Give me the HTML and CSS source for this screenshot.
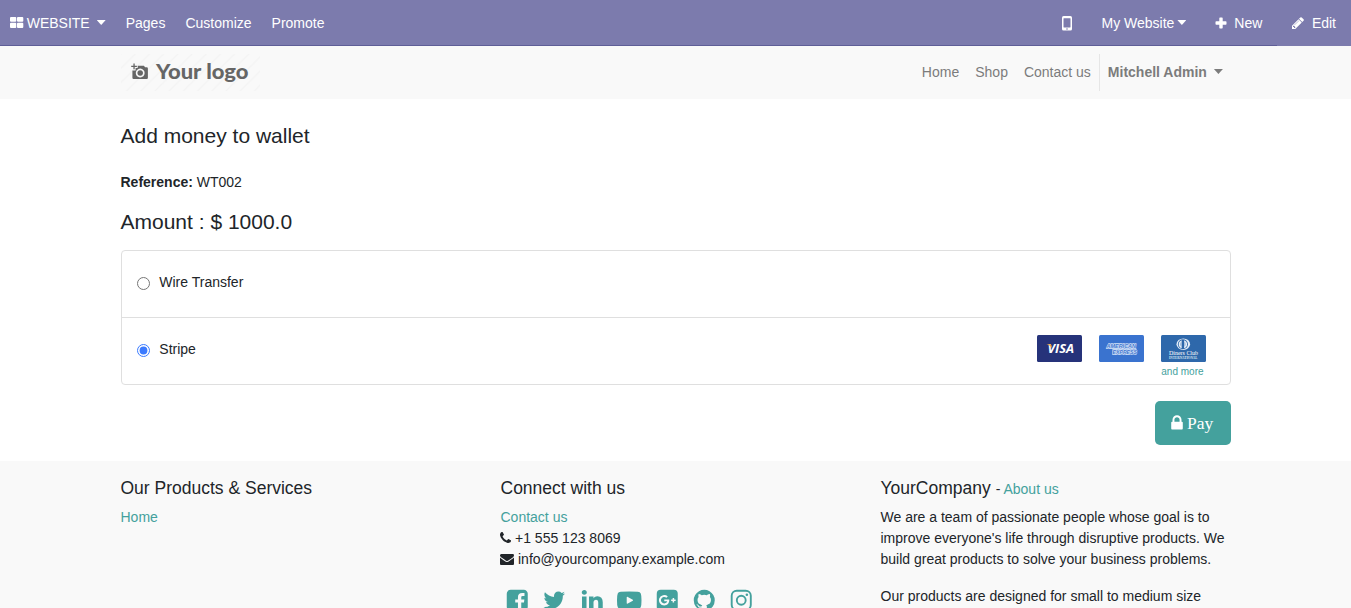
FILE: index.html
```html
<!DOCTYPE html>
<html lang="en">
<head>
<meta charset="utf-8">
<title>Add money to wallet</title>
<link rel="stylesheet" href="styles.css">
</head>
<body>
<nav class="topbar">
  <div class="topbar-left">
    <a class="brand"><svg class="ic" width="14" height="14" viewBox="0 0 14 14"><path d="M1 1h4.300q1 0 1 1v2.800q0 1-1 1H1q-1 0-1-1V2q0-1 1-1zM8 1h4.300q1 0 1 1v2.800q0 1-1 1H8q-1 0-1-1V2q0-1 1-1zM1 6.800h4.300q1 0 1 1v3.200q0 1-1 1H1q-1 0-1-1V7.800q0-1 1-1zM8 6.800h4.300q1 0 1 1v3.200q0 1-1 1H8q-1 0-1-1V7.800q0-1 1-1z"/></svg><span>WEBSITE</span><i class="caret"></i></a>
    <a>Pages</a><a>Customize</a><a>Promote</a>
  </div>
  <div class="topbar-right">
    <a class="mobile"><svg width="10" height="15" viewBox="0 0 10 15"><rect width="10" height="14.500" rx="1.600"/><rect class="screen" x="1.500" y="2.200" width="7" height="9.300" rx=".4"/><circle class="screen" cx="5" cy="13" r=".8"/></svg></a>
    <a class="site">My Website<i class="caret tight"></i></a>
    <a class="new"><svg width="12" height="12" viewBox="0 0 12 12"><path d="M5 .5h2q.7 0 .7.700v3.100h3.100q.7 0 .7.700v2q0 .7-.7.700h-3.100v3.100q0 .7-.7.700h-2q-.7 0-.7-.7v-3.100h-3.100q-.7 0-.7-.7v-2q0-.7.7-.7h3.100v-3.100q0-.7.7-.7z"/></svg>New</a>
    <a class="edit"><svg width="14" height="14" viewBox="0 0 1792 1792"><path d="M491 1536l91-91-235-235-91 91v107h128v128h107zm523-928q0-22-22-22-10 0-17 7l-542 542q-7 7-7 17 0 22 22 22 10 0 17-7l542-542q7-7 7-17zm-54-192l416 416-832 832h-416v-416zm683 96q0 53-37 90l-166 166-416-416 166-165q36-38 90-38 53 0 91 38l235 234q37 39 37 91z"/></svg>Edit</a>
  </div>
</nav>
<header class="site-header">
  <div class="container header-row">
    <svg class="logo" width="139" height="37" viewBox="0 0 139 37">
      <defs><pattern id="stripes" width="14.200" height="14.200" patternUnits="userSpaceOnUse"><path d="M-2 16.200L16.200-2M-2 2L2-2M12.200 16.200L16.200 12.200" stroke="#f3f3f3" stroke-width="1.200"/></pattern></defs>
      <rect width="139" height="37" fill="url(#stripes)"/>
      <path fill="#666" fill-rule="evenodd" d="M12.400 9.500h1.300v2.300h2.200v1.300h-2.200v2.200h-1.300v-2.200h-2.200v-1.300h2.200zM16.700 11.800h6.200l1.200 1.500h1.600q1.200 0 1.200 1.200v9.300q0 1.200-1.200 1.200H12.600q-1.200 0-1.200-1.200v-7.400h3.200v-2.300h2.100zM19.200 14.600a4.400 4.400 0 1 0 .01 0zM19.200 16.200a2.800 2.800 0 1 1-.01 0z"/>
      <text class="logo-text" x="35" y="25.200" textLength="92.500" lengthAdjust="spacingAndGlyphs">Your logo</text>
    </svg>
    <nav class="menu"><a>Home</a><a>Shop</a><a>Contact us</a><a class="user">Mitchell Admin<i class="caret"></i></a></nav>
  </div>
</header>
<main class="container main">
  <h3>Add money to wallet</h3>
  <p class="ref"><b>Reference:</b> WT002</p>
  <h3>Amount : $ 1000.0</h3>
  <form class="card">
    <div class="row"><input type="radio" name="method" id="wire"><label for="wire">Wire Transfer</label></div>
    <div class="row">
      <input type="radio" name="method" id="stripe" checked><label for="stripe">Stripe</label>
      <div class="payments">
        <svg width="45" height="27" viewBox="0 0 45 27"><rect width="45" height="27" rx="1.500" fill="#26337a"/><text class="visa" x="10.500" y="18" textLength="26.500" lengthAdjust="spacingAndGlyphs">VISA</text><path d="M9.500 9.200h3.600q1.200 0 1.400 1.200l.6 2.600q-1.600-2.800-5.600-3.800z" fill="#f0a030"/></svg>
        <svg width="45" height="27" viewBox="0 0 45 27"><rect width="45" height="27" rx="1.500" fill="#3a73cf"/><path d="M9.500 8.300H37v5.200h.8v6.200H13.200v-5.800H7z" fill="#d5e3f7" opacity=".6"/><text class="amex" x="7.500" y="13.200" textLength="29.500" lengthAdjust="spacingAndGlyphs">AMERICAN</text><text class="amex" x="13.500" y="19.300" textLength="24.500" lengthAdjust="spacingAndGlyphs">EXPRESS</text></svg>
        <div class="last"><svg width="45" height="27" viewBox="0 0 45 27"><rect width="45" height="27" rx="1.500" fill="#2e68ab"/><ellipse cx="22.300" cy="9.200" rx="6.800" ry="5.800" fill="#e5eef8"/><circle cx="21.900" cy="9.200" r="5" fill="#2e68ab"/><path d="M20.700 5.200v8q-3-1-3-4t3-4zM23.100 5.200v8q3-1 3-4t-3-4z" fill="#e5eef8"/><path d="M20.300 6.800v4.800q-1-.8-1-2.400t1-2.400zM23.500 6.800v4.800q1-.8 1-2.400t-1-2.400z" fill="#2e68ab" opacity=".5"/><text class="diners" x="8" y="20.300" textLength="29" lengthAdjust="spacingAndGlyphs">Diners Club</text><text class="diners-sub" x="8" y="24.300" textLength="28.500" lengthAdjust="spacingAndGlyphs">INTERNATIONAL</text></svg><a>and more</a></div>
      </div>
    </div>
  </form>
  <div class="actions"><button class="pay"><svg width="18" height="18" viewBox="0 0 1792 1792"><path d="M640 768h512v-192q0-106-75-181t-181-75-181 75-75 181v192zm832 96v576q0 40-28 68t-68 28h-960q-40 0-68-28t-28-68v-576q0-40 28-68t68-28h32v-192q0-184 132-316t316-132 316 132 132 316v192h32q40 0 68 28t28 68z"/></svg>Pay</button></div>
</main>
<footer class="footer">
  <div class="container footer-grid">
    <section><h4>Our Products &amp; Services</h4><a>Home</a></section>
    <section>
      <h4>Connect with us</h4>
      <a>Contact us</a>
      <div class="contact phone"><svg width="14" height="14" viewBox="192 128 1792 1792"><path d="M1600 1240q0 27-10 70.500t-21 68.500q-21 50-122 106-94 51-186 51-27 0-53-3.500t-57.500-12.500-47-14.500-55.500-20.500-49-18q-98-35-175-83-127-79-264-216t-216-264q-48-77-83-175-3-9-18-49t-20.500-55.500-14.500-47-12.500-57.500-3.500-53q0-92 51-186 56-101 106-122 25-11 68.500-21t70.500-10q14 0 21 3 18 6 53 76 11 19 30 54t35 63.500 31 53.500q3 4 17.500 25t21.500 35.500 7 28.500q0 20-28.500 50t-62 55-62 53-28.500 46q0 9 5 22.500t8.500 20.500 14 24 11.500 19q76 137 174 235t235 174q2 1 19 11.500t24 14 20.500 8.500 22.500 5q18 0 46-28.500t53-62 55-62 50-28.500q14 0 28.500 7t35.500 21.500 25 17.500q25 15 53.500 31t63.500 35 54 30q70 35 76 53 3 7 3 21z"/></svg>+1 555 123 8069</div>
      <div class="contact mail"><svg width="14" height="14" viewBox="0 128 1792 1792"><path d="M1792 710v794q0 66-47 113t-113 47h-1472q-66 0-113-47t-47-113v-794q44 49 101 87 362 246 497 345 57 42 92.500 65.500t94.500 48 110 24.500h2q51 0 110-24.500t94.500-48 92.500-65.500q170-123 498-345 57-39 100-87zm0-294q0 79-49 151t-122 123q-376 261-468 325-10 7-42.500 31t-54 38-52 31.500-57.500 27-50 9h-2q-23 0-50-9t-57.500-27-52-31.500-54-38-42.500-31q-91-64-262-182.500t-205-142.500q-62-42-117-115.500t-55-136.500q0-78 41.500-130t118.500-52h1472q65 0 112.500 47t47.500 113z"/></svg>info@yourcompany.example.com</div>
      <div class="social">
        <svg viewBox="0 0 1792 1792"><path d="M1376 128q119 0 203.500 84.500t84.500 203.500v960q0 119-84.500 203.500t-203.500 84.500h-188v-595h199l30-232h-229v-148q0-56 23.500-84t91.500-28l122-1v-207q-63-9-178-9-136 0-217.500 80t-81.500 226v171h-200v232h200v595h-532q-119 0-203.500-84.500t-84.500-203.500v-960q0-119 84.500-203.500t203.500-84.500h960z"/></svg>
        <svg viewBox="0 0 1792 1792"><path d="M1684 408q-67 98-162 167 1 14 1 42 0 130-38 259.500t-115.500 248.500-184.500 210.500-258 146-323 54.500q-271 0-496-145 35 4 78 4 225 0 401-138-105-2-188-64.500t-114-159.500q33 5 61 5 43 0 85-11-112-23-185.500-111.500t-73.500-205.500v-4q68 38 146 41-66-44-105-115t-39-154q0-88 44-163 121 149 294.500 238.500t371.500 99.500q-8-38-8-74 0-134 94.500-228.500t228.500-94.500q140 0 236 102 109-21 205-78-37 115-142 178 93-10 186-50z"/></svg>
        <svg viewBox="0 0 1792 1792"><path d="M477 625v991h-330v-991h330zm21-306q1 73-50.500 122t-135.500 49h-2q-82 0-132-49t-50-122q0-74 51.500-122.500t134.500-48.500 133 48.500 51 122.500zm1166 729v568h-329v-530q0-105-40.500-164.500t-126.500-59.500q-63 0-105.500 34.500t-63.500 85.500q-11 30-11 81v553h-329q2-399 2-647t-1-296l-1-48h329v144h-2q20-32 41-56t56.500-52 87-43.500 114.500-15.500q171 0 275 113.500t104 332.500z"/></svg>
        <svg viewBox="0 0 1792 1792"><path fill-rule="evenodd" d="M896 256q330 0 624 18 175 10 218 120 54 130 54 502t-54 502q-43 110-218 120-294 18-624 18t-624-18q-175-10-218-120Q0 1268 0 896t54-502q43-110 218-120 294-18 624-18zM711 670v452q0 45 45 30l400-225q28-31 0-62L756 640q-45-15-45 30z"/></svg>
        <svg viewBox="0 0 1792 1792"><path fill-rule="evenodd" d="M416 128h960q288 0 288 288v960q0 288-288 288H416q-288 0-288-288V416q0-288 288-288zM1045 905q0-26-6-64H677v132h217q-20 148-217 160a237 237 0 1 1 156-414l104-100A383 383 0 1 0 677 1280q360-15 368-375zM1290 731v110h-109v110h109v110h110V951h109V841h-109V731z"/></svg>
        <svg viewBox="0 0 1792 1792"><path d="M896 128q209 0 385.500 103t279.500 279.500 103 385.500q0 251-146.500 451.500t-378.500 277.500q-27 5-40-7t-13-30q0-3 .5-76.500t.5-134.500q0-97-52-142 57-6 102.500-18t94-39 81-66.500 53-105 20.500-150.500q0-119-79-206 37-91-8-204-28-9-81 11t-92 44l-38 24q-93-26-192-26t-192 26q-16-11-42.500-27t-83.500-38.500-85-13.500q-45 113-8 204-79 87-79 206 0 85 20.500 150t52.500 105 80.500 67 94 39 102.500 18q-39 36-49 103-21 10-45 15t-57 5-65.500-21.500-55.500-62.500q-19-32-48.500-52t-49.500-24l-20-3q-21 0-29 4.500t-5 11.500 9 14 13 12l7 5q22 10 43.500 38t31.500 51l10 23q13 38 44 61.500t67 30 69.500 7 55.500-3.500l23-4q0 38 .5 88.500t.5 54.500q0 18-13 30t-40 7q-232-77-378.500-277.500t-146.500-451.500q0-209 103-385.500t279.500-279.500 385.500-103z"/></svg>
        <svg viewBox="0 0 1792 1792"><g class="line"><rect x="197" y="197" width="1398" height="1398" rx="370"/><circle cx="896" cy="896" r="325"/></g><circle cx="1306" cy="486" r="92"/></svg>
      </div>
    </section>
    <section>
      <h4>YourCompany<small> <span class="dash">-</span> <a>About us</a></small></h4>
      <p>We are a team of passionate people whose goal is to improve everyone's life through disruptive products. We build great products to solve your business problems.</p>
      <p>Our products are designed for small to medium size</p>
    </section>
  </div>
</footer>
</body>
</html>
```
FILE: styles.css
```css
* { box-sizing: border-box; }
html, body { height: 100%; }
body { margin: 0; overflow: hidden; background: #fff; color: #212529; font: 14px/21px "Liberation Sans", Arial, sans-serif; }
svg { display: block; flex: none; fill: currentColor; }
h3, h4, p { margin: 0; font-weight: 400; }
a { color: #44a19d; }
.container { width: 1110px; margin: 0 auto; }
.caret { display: inline-block; width: 9px; height: 5px; background: currentColor; clip-path: polygon(0 0, 100% 0, 50% 100%); margin-left: 7px; vertical-align: 3px; }
.caret.tight { margin-left: 3px; }

.topbar { height: 46px; display: flex; justify-content: space-between; background: linear-gradient(#5f5e97, #5f5e97) left bottom / 1277px 1px no-repeat #7c7bad; color: #fff; }
.topbar a { color: #fff; display: flex; align-items: center; height: 46px; }
.topbar-left { display: flex; gap: 20px; padding-left: 9.700px; }
.topbar .brand svg { margin-right: 3px; }
.topbar .caret { margin-bottom: 1px; }
.topbar-right { display: flex; padding-right: 15px; }
.topbar-right .mobile { margin-right: 29px; }
.screen { fill: #7c7bad; }
.topbar-right .site { margin-right: 29px; }
.topbar-right .new { margin-right: 28.500px; }
.new svg, .edit svg { margin-right: 7px; }

.site-header { height: 53px; padding: 8px 0; background: #f9f9f9; }
.header-row { display: flex; justify-content: space-between; }
.logo-text { font: 900 20.500px Lato, sans-serif; fill: #666; }
.menu { display: flex; height: 37px; }
.menu a { padding: 8px; color: #7c7c7c; }
.menu .user { padding-right: 7.600px; font-weight: 700; border-left: 1px solid #e6e6e6; }

.main { padding-top: 24px; }
.main h3 { font-size: 21px; line-height: 25px; }
.ref { margin: 24px 0 16px; }
.card { margin: 16px 0; border: 1px solid #dfdfdf; border-radius: 4px; }
.row { display: flex; height: 66px; padding: 21px 24px 0 15px; }
.row + .row { height: 67px; border-top: 1px solid #dfdfdf; }
.row input { width: 13px; height: 13px; margin: 5px 9.800px 0 0; accent-color: #3b7aff; }
.payments { margin: -4px 0 0 auto; display: flex; gap: 17px; }
.last a { display: block; padding-left: .8px; font-size: 10px; line-height: 19px; }
.visa { font: italic 700 12.500px "Open Sans", sans-serif; fill: #fff; }
.amex { font: italic 700 6.200px "Liberation Sans", sans-serif; fill: #3a73cf; stroke: #e4eefb; stroke-width: .8px; paint-order: stroke; }
.diners { font: 6.800px "Liberation Serif", serif; fill: #fff; }
.diners-sub { font: 700 3.500px "Liberation Serif", serif; fill: #dce8f4; }
.actions { display: flex; justify-content: flex-end; }
.pay { display: flex; align-items: center; width: 76px; height: 44px; padding: 0 0 0 13.500px; border: 0; border-radius: 5px; background: #44a19d; color: #fff; font: 17.500px "Liberation Serif", serif; }
.pay svg { margin: -1px 1px 0 0; }

.footer { height: 147px; margin-top: 16px; padding-top: 17px; background: #f9f9f9; overflow: hidden; }
.footer-grid { display: grid; grid-template-columns: 350px 350px 350px; gap: 30px; }
.footer h4 { height: 21px; font-size: 17.500px; line-height: 21px; margin-bottom: 8px; }
.footer small { font-size: 14px; line-height: 1; }
.dash { margin-left: 1px; }
.footer p { margin-bottom: 16px; }
.contact { display: flex; align-items: center; }
.phone svg { margin: 0 1px 0 -.5px; }
.mail svg { margin: 0 4px 0 -.5px; }
.social { display: flex; gap: 13px; margin: 18px 0 0 4px; color: #44a19d; }
.social svg { width: 24.500px; height: 24.500px; }
.social svg:last-child { margin-left: -1px; }
.social .line { fill: none; stroke: currentColor; stroke-width: 138px; }
```
